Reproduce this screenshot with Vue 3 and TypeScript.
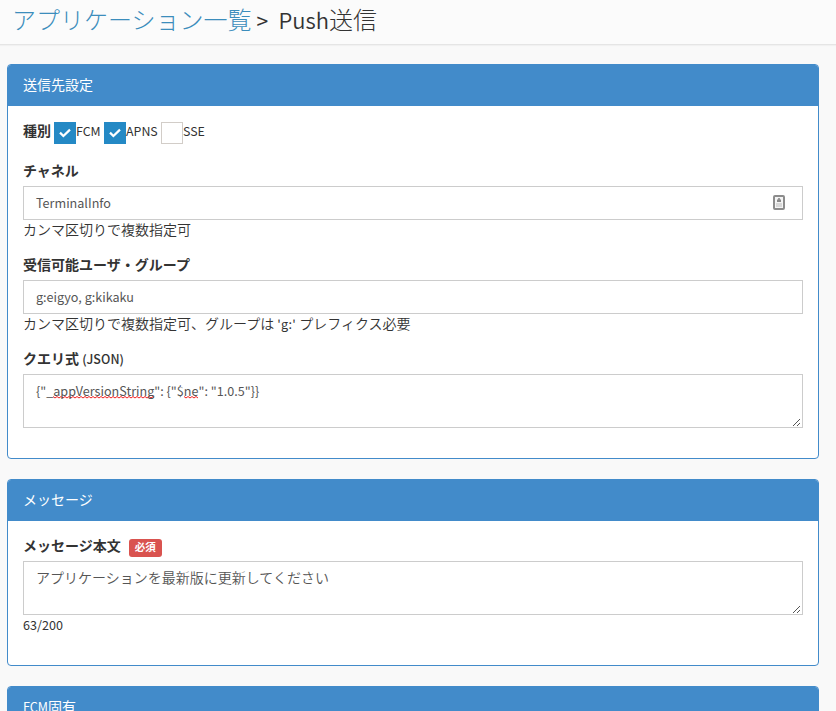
<script setup lang="ts">
import { ref } from 'vue'

interface Target {
  name: string
  checked: boolean
}

const targets = ref<Target[]>([
  { name: 'FCM', checked: true },
  { name: 'APNS', checked: true },
  { name: 'SSE', checked: false },
])
const handleDots: number[][] = [
  [0, 7], [1, 6], [2, 5], [3, 4], [4, 3], [5, 2], [6, 1],
  [4, 7], [5, 6], [6, 5],
]
</script>

<template>
  <div class="page">
    <header class="title-bar">
      <h1><a class="crumb">アプリケーション一覧</a><span class="sep">&gt;</span><span class="push">Push</span>送信</h1>
    </header>
    <main>
      <section class="panel first">
        <h2>送信先設定</h2>
        <div class="body">
          <div class="checks">
            <b>種別</b>
            <label v-for="t in targets" :key="t.name" :class="['check', t.name.toLowerCase()]" @click="t.checked = !t.checked">
              <span class="box" :class="{ on: t.checked }">
                <svg v-if="t.checked" width="12" height="10" viewBox="0 0 12 10"><path d="M1 4.6 4.4 8 11 1.6" /></svg>
              </span>
              <span class="lat">{{ t.name }}</span>
            </label>
          </div>
          <div class="group">
            <div class="label">チャネル</div>
            <div class="field spread">
              <span class="lat">TerminalInfo</span>
              <svg class="autofill" width="12" height="15" viewBox="0 0 12 15">
                <rect x="1" y="1" width="10" height="13" rx="1" />
                <path class="fill" d="M5.2 3h1.6v1.5h1.2v2.5H4V4.5h1.2z" />
                <path class="soft" d="M3 8.6h6v1H3zM3 10.6h6v1H3z" />
              </svg>
            </div>
            <div class="help">カンマ区切りで複数指定可</div>
          </div>
          <div class="group">
            <div class="label">受信可能ユーザ・グループ</div>
            <div class="field"><span class="lat">g:eigyo, g:kikaku</span></div>
            <div class="help">カンマ区切りで複数指定可、グループは <span class="lat quote">'g:'</span> プレフィクス必要</div>
          </div>
          <div class="group">
            <div class="label">クエリ式 <span class="lat">(JSON)</span></div>
            <div class="field area">
              <span class="lat json">{"_<span class="typo">appVersionString</span>": {"$<span class="typo">ne</span>": "1.0.5"}}</span>
              <svg class="handle" width="8" height="8"><rect v-for="(d, i) in handleDots" :key="i" :x="d[0]" :y="d[1]" width="1" height="1" /></svg>
            </div>
          </div>
        </div>
      </section>
      <section class="panel second">
        <h2>メッセージ</h2>
        <div class="body">
          <div class="group">
            <div class="label">メッセージ本文<span class="badge">必須</span></div>
            <div class="field area">
              <span>アプリケーションを最新版に更新してください</span>
              <svg class="handle" width="8" height="8"><rect v-for="(d, i) in handleDots" :key="i" :x="d[0]" :y="d[1]" width="1" height="1" /></svg>
            </div>
            <div class="help"><span class="lat">63/200</span></div>
          </div>
        </div>
      </section>
      <section class="panel third">
        <h2><span class="lat">FCM</span>固有</h2>
      </section>
    </main>
  </div>
</template>

<style>
body {
  margin: 0;
  overflow: hidden;
}
</style>

<style scoped>
* {
  box-sizing: border-box;
}
.page {
  height: 711px;
  overflow: hidden;
  background: #f9f9f9;
  color: #333;
  font: 350 14px/20px "Noto Sans CJK JP", sans-serif;
}
.title-bar {
  height: 45px;
  padding: 1px 12px 0;
  background: #fbfbfb;
  border-bottom: 1px solid #e5e5e5;
  box-shadow: 0 1px 1px #f1f1f1;
}
h1 {
  margin: 0;
  font-size: 24px;
  line-height: 36px;
  font-weight: 300;
  white-space: nowrap;
}
.crumb {
  color: #3c8dbc;
}
.sep {
  display: inline-block;
  width: 27px;
  padding-left: 5px;
  font-size: 21px;
  font-weight: 400;
}
.push {
  font-size: 22px;
  font-weight: 350;
}
main {
  display: flex;
  flex-direction: column;
  gap: 20px;
  width: 812px;
  margin: 19px 0 0 7px;
}
.panel {
  border: 1px solid #428bca;
  border-radius: 4px;
  background: #fff;
  overflow: hidden;
  flex-shrink: 0;
}
.first {
  height: 395px;
}
.second {
  height: 187px;
}
.third {
  height: 60px;
}
h2 {
  height: 41px;
  margin: 0;
  padding: 9px 15px;
  background: #428bca;
  color: #fff;
  font-size: 14px;
  line-height: 20px;
  font-weight: 400;
}
.body {
  padding: 15px;
}
.lat {
  font-size: 12.6px;
  font-weight: 400;
}
.checks {
  display: flex;
  height: 25px;
  margin-bottom: 15px;
}
.checks b {
  width: 31px;
  font-weight: 700;
  line-height: 18px;
}
.check {
  display: flex;
}
.check .lat {
  font-size: 12.4px;
}
.fcm {
  width: 50px;
}
.apns {
  width: 57px;
}
.box {
  display: flex;
  flex: none;
  align-items: center;
  justify-content: center;
  width: 22px;
  height: 22px;
  margin-top: 1px;
  border: 1px solid #d2cdc8;
}
.box.on {
  background: #2489c5;
  border-color: #2489c5;
}
.box path {
  fill: none;
  stroke: #fff;
  stroke-width: 2.2;
}
.group {
  margin-bottom: 15px;
}
.label {
  display: flex;
  height: 20px;
  margin-bottom: 5px;
  font-weight: 700;
  line-height: 18px;
  white-space: pre;
}
.label .lat {
  padding-top: 1px;
  font-size: 12.4px;
  font-weight: 500;
  letter-spacing: 0.1px;
}
.field {
  position: relative;
  height: 34px;
  padding: 6px 12px;
  border: 1px solid #ccc;
  color: #555;
}
.field > span {
  display: block;
  line-height: 19px;
}
.area {
  height: 54px;
}
.area > span {
  line-height: 18px;
}
.area > .json {
  line-height: 20px;
}
.spread {
  display: flex;
  justify-content: space-between;
  padding-right: 17px;
}
.autofill {
  margin-top: 2px;
}
.autofill rect {
  fill: #f4f4f4;
  stroke: #8c8c8c;
  stroke-width: 2;
}
.autofill .fill {
  fill: #888;
}
.autofill .soft {
  fill: #bbb;
}
.help {
  height: 20px;
  line-height: 18px;
  white-space: nowrap;
}
.quote {
  letter-spacing: 0.3px;
}
.handle {
  position: absolute;
  right: 1px;
  bottom: 1px;
  fill: #555;
}
.typo {
  background: url("data:image/svg+xml,%3Csvg xmlns='http://www.w3.org/2000/svg' width='4' height='3'%3E%3Cpath d='M0 .5 L2 2 L4 .5' fill='none' stroke='%23f02020' stroke-width='1'/%3E%3C/svg%3E") repeat-x left bottom 1px;
}
.badge {
  width: 33px;
  height: 18px;
  margin: 3px 0 0 8px;
  border-radius: 3px;
  background: #d9534f;
  color: #fff;
  font-size: 10.5px;
  line-height: 16px;
  text-align: center;
}
</style>
